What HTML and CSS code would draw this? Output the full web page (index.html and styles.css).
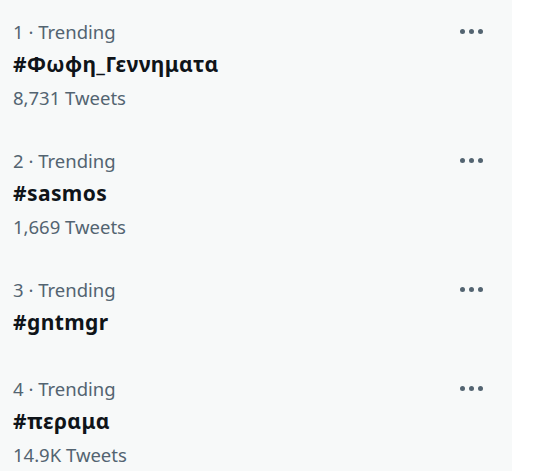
FILE: index.html
```html
<!DOCTYPE html>
<html>
<head>
<meta charset="utf-8">
<link rel="stylesheet" href="styles.css">
</head>
<body>
<div class="panel">
  <div class="trend">
    <div class="row"><span class="meta">1 · Trending</span><span class="more"><i></i><i></i><i></i></span></div>
    <div class="title">#Φωφη_Γεννηματα</div>
    <div class="meta">8,731 Tweets</div>
  </div>
  <div class="trend">
    <div class="row"><span class="meta">2 · Trending</span><span class="more"><i></i><i></i><i></i></span></div>
    <div class="title">#sasmos</div>
    <div class="meta">1,669 Tweets</div>
  </div>
  <div class="trend trend-short">
    <div class="row"><span class="meta">3 · Trending</span><span class="more"><i></i><i></i><i></i></span></div>
    <div class="title">#gntmgr</div>
  </div>
  <div class="trend">
    <div class="row"><span class="meta">4 · Trending</span><span class="more"><i></i><i></i><i></i></span></div>
    <div class="title">#περαμα</div>
    <div class="meta">14.9K Tweets</div>
  </div>
</div>
</body>
</html>
```
FILE: styles.css
```css
html, body { margin: 0; padding: 0; background: #ffffff; }
body { font-family: "Noto Sans", "Open Sans", sans-serif; }
.panel { width: 512px; height: 471px; background: #f7f9f9; }
.trend { padding: 15px 29px 15px 13px; }
.trend-short { padding-bottom: 18px; }
.row { display: flex; justify-content: space-between; align-items: center; height: 33px; }
.meta { font-size: 18.5px; color: #536471; line-height: 33px; height: 33px; }
.title { font-size: 21px; letter-spacing: 0.4px; font-weight: 700; color: #0f1419; line-height: 33px; height: 33px; }
.more { display: flex; gap: 4px; align-items: center; }
.more i { display: block; width: 5px; height: 5px; border-radius: 50%; background: #536471; }
```
